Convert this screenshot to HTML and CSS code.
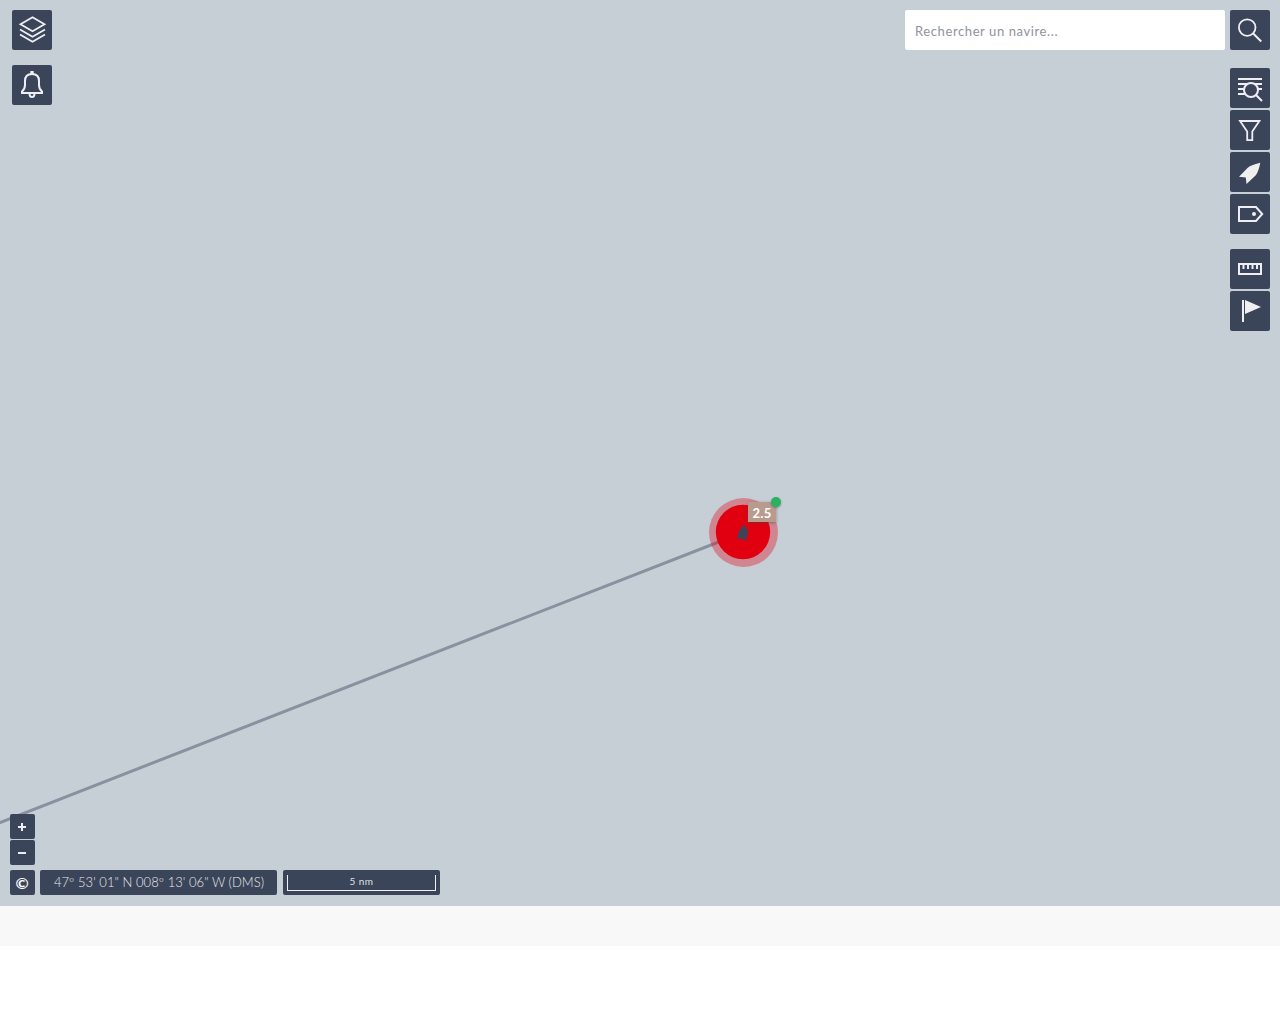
FILE: index.html
```html
<!DOCTYPE html>
<html lang="fr">
<head>
<meta charset="utf-8">
<title>Carte des navires</title>
<link rel="stylesheet" href="styles.css">
</head>
<body>
<main class="map">
  <svg class="track" width="1280" height="906" viewBox="0 0 1280 906">
    <path d="M-5 824.5L743 532.5" stroke="#8a90a0" stroke-width="3"/>
    <circle cx="743.5" cy="532.5" r="34.5" fill="#e1000f" fill-opacity=".35"/>
    <circle cx="743" cy="532" r="27.2" fill="#e1000f"/>
    <path d="M744.5 524.3L748.2 532L745.5 541.2L742.6 538.4L737 539L739.5 530.500Z" fill="#3b4559"/>
  </svg>
  <div class="speed">2.5<span class="status"></span></div>

  <header class="top">
    <nav class="left-tools">
      <button class="tool" aria-label="Couches"><svg width="40" height="40" viewBox="0 0 40 40"><path d="M20.500 7.200L32.500 14.300L20.500 21.300L8.500 14.300ZM8 19.500L20.500 26.700L33 19.500M8 24.500L20.500 31.700L33 24.500"/></svg></button>
      <button class="tool" aria-label="Alertes"><svg width="40" height="40" viewBox="0 0 40 40"><path class="thick" d="M10 28V26.500Q13 24 13 20V16Q13 9 20 9T27 16V20Q27 24 30 26.500V28ZM17.500 28.500Q17.500 32 20 32T22.500 28.500"/><path class="solid" d="M18.300 6H21.700V9H18.300Z"/></svg></button>
    </nav>
    <div class="right-tools">
      <div class="search">
        <input class="search-input" type="text" placeholder="Rechercher un navire...">
        <button class="tool" aria-label="Rechercher"><svg width="40" height="40" viewBox="0 0 40 40"><circle cx="17.200" cy="17.600" r="8.300"/><path class="thick" d="M23.200 23.500L31.200 31.500"/></svg></button>
      </div>
      <nav class="tool-group">
        <button class="tool" aria-label="Liste"><svg width="40" height="40" viewBox="0 0 40 40"><path class="thick" d="M8 11H32M8 16H32M8 21H14M28 21H32M8 26H15M26 27L32 33"/><circle class="thick lens" cx="21" cy="22" r="7"/></svg></button>
        <button class="tool" aria-label="Filtrer"><svg width="40" height="40" viewBox="0 0 40 40"><path d="M10 11H29.400L22.300 21.500V30.200H17.200V21.500Z"/></svg></button>
        <button class="tool" aria-label="Navires"><svg width="40" height="40" viewBox="0 0 40 40"><path class="solid" d="M30.300 10.800Q20.500 13 17.500 16L9 24.700L15.800 25.500L16.500 32L25.800 23.200Q28.500 20 30.300 10.800Z"/></svg></button>
        <button class="tool" aria-label="Étiquettes"><svg width="40" height="40" viewBox="0 0 40 40"><path class="thick" d="M9 13H26L32.200 20L26 27H9Z"/><circle class="solid" cx="24" cy="20" r="2"/></svg></button>
      </nav>
      <nav class="tool-group">
        <button class="tool" aria-label="Mesurer"><svg width="40" height="40" viewBox="0 0 40 40"><path class="thick" d="M9 15H31V25H9ZM13.500 15V20M18 15V20M22.500 15V20M27 15V20"/></svg></button>
        <button class="tool" aria-label="Repère"><svg width="40" height="40" viewBox="0 0 40 40"><path class="thick" d="M13 9V31"/><path class="solid" d="M15 9L31 16L15 23Z"/></svg></button>
      </nav>
    </div>
  </header>

  <footer class="bottom">
    <div class="zoom">
      <button class="mini" aria-label="Zoom avant"><svg width="25" height="25" viewBox="0 0 25 25"><path class="thick" d="M8 13H16M12 9V17"/></svg></button>
      <button class="mini" aria-label="Zoom arrière"><svg width="25" height="25" viewBox="0 0 25 25"><path class="thick" d="M8 13H16"/></svg></button>
    </div>
    <div class="info">
      <button class="mini copyright">©</button>
      <div class="coords">47º 53' 01" N 008º 13' 06" W (DMS)</div>
      <div class="scale"><div class="scale-line">5 nm</div></div>
    </div>
  </footer>
</main>
<div class="strip"></div>
</body>
</html>
```
FILE: styles.css
```css
* { box-sizing: border-box; }
body { margin: 0; background: #fff; font-family: Lato, "Open Sans", sans-serif; }
button { border: 0; padding: 0; font: inherit; }
svg { display: block; fill: none; stroke: #eeeef4; stroke-width: 1.8; }
.thick { stroke-width: 2; }
.solid { fill: #f0f0f0; stroke: none; }
.lens { fill: #3b4559; }
.map {
  position: relative;
  display: flex;
  flex-direction: column;
  justify-content: space-between;
  height: 906px;
  padding: 10px 10px 11px;
  overflow: hidden;
  background: #c6ced6;
}
.track { position: absolute; left: 0; top: 0; stroke: none; }
.speed {
  position: absolute;
  left: 748px;
  top: 502px;
  width: 28px;
  height: 20px;
  background: #b89b8d;
  box-shadow: 0 1px 3px rgba(59, 69, 89, .5);
  color: #fff;
  font: 700 13px/22px Lato, sans-serif;
  letter-spacing: .2px;
  text-align: center;
}
.status {
  position: absolute;
  right: -5px;
  top: -5px;
  width: 10px;
  height: 10px;
  border-radius: 50%;
  background: #29b361;
  box-shadow: 0 1px 2px rgba(59, 69, 89, .5);
}
.top { position: relative; display: flex; justify-content: space-between; }
.left-tools { display: flex; flex-direction: column; gap: 15px; padding-left: 2px; }
.tool { display: block; width: 40px; height: 40px; border-radius: 2px; background: #3b4559; }
.right-tools { display: flex; flex-direction: column; align-items: flex-end; }
.search { display: flex; gap: 5px; margin-bottom: 18px; }
.search-input {
  width: 320px;
  height: 40px;
  padding: 1px 10px 0;
  border: 0;
  border-radius: 2px;
  background: #fff;
  font: 400 13px Lato, sans-serif;
  letter-spacing: .6px;
}
.search-input::placeholder { color: #8f939d; opacity: 1; }
.tool-group { display: flex; flex-direction: column; gap: 2px; margin-bottom: 15px; }
.bottom { position: relative; display: flex; flex-direction: column; gap: 5px; }
.zoom { display: flex; flex-direction: column; gap: 1px; }
.mini { width: 25px; height: 25px; border-radius: 2px; background: #3b4559; color: #fff; }
.copyright { padding-right: 1px; font: 700 16px/25px Lato, sans-serif; text-align: center; }
.info { display: flex; }
.coords {
  width: 237px;
  height: 25px;
  margin: 0 6px 0 5px;
  padding-left: 1px;
  border-radius: 2px;
  background: #3b4559;
  color: #e6e8ee;
  font: 300 13px/25px Lato, sans-serif;
  letter-spacing: .05px;
  text-align: center;
  white-space: nowrap;
}
.scale { width: 157px; height: 25px; padding: 5px 4px; border-radius: 2px; background: #3b4559; }
.scale-line {
  height: 16px;
  border: 1px solid #f0f0f4;
  border-top: 0;
  color: #dfe1e8;
  font: 400 10px/12px Lato, sans-serif;
  letter-spacing: .5px;
  text-align: center;
}
.strip { height: 40px; background: #f8f8f8; }
```
